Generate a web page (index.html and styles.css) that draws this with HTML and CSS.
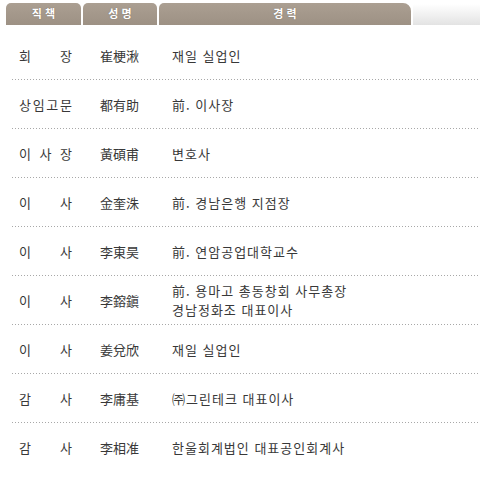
FILE: index.html
```html
<!DOCTYPE html>
<html lang="ko">
<head>
<meta charset="utf-8">
<title>임원 현황</title>
<link rel="stylesheet" href="styles.css">
</head>
<body>
<div class="board">
  <div class="head">
    <div class="tab tab-pos">직 책</div>
    <div class="tab tab-name">성 명</div>
    <div class="tab tab-career">경 력</div>
    <div class="head-rest"></div>
  </div>
  <div class="rows">
    <div class="row"><div class="pos"><span>회</span><span>장</span></div><div class="name">崔梗湫</div><div class="career">재일 실업인</div></div>
    <div class="row"><div class="pos"><span>상</span><span>임</span><span>고</span><span>문</span></div><div class="name">都有助</div><div class="career">前. 이사장</div></div>
    <div class="row"><div class="pos"><span>이</span><span>사</span><span>장</span></div><div class="name">黃碩甫</div><div class="career">변호사</div></div>
    <div class="row"><div class="pos"><span>이</span><span>사</span></div><div class="name">金奎洙</div><div class="career">前. 경남은행 지점장</div></div>
    <div class="row"><div class="pos"><span>이</span><span>사</span></div><div class="name">李東昊</div><div class="career">前. 연암공업대학교수</div></div>
    <div class="row"><div class="pos"><span>이</span><span>사</span></div><div class="name">李鎔鎭</div><div class="career">前. 용마고 총동창회 사무총장<br>경남정화조 대표이사</div></div>
    <div class="row"><div class="pos"><span>이</span><span>사</span></div><div class="name">姜兌欣</div><div class="career">재일 실업인</div></div>
    <div class="row"><div class="pos"><span>감</span><span>사</span></div><div class="name">李庸基</div><div class="career">㈜그린테크 대표이사</div></div>
    <div class="row last"><div class="pos"><span>감</span><span>사</span></div><div class="name">李相准</div><div class="career">한울회계법인 대표공인회계사</div></div>
  </div>
</div>
</body>
</html>
```
FILE: styles.css
```css
html, body {
  margin: 0;
  padding: 0;
  background: #ffffff;
}
body {
  font-family: "Noto Sans CJK KR", "Noto Sans", sans-serif;
  color: #383838;
  width: 480px;
}
.board {
  padding-top: 3px;
}
.head {
  display: flex;
  height: 22px;
  padding-left: 6px;
  gap: 2px;
}
.tab {
  background: linear-gradient(#ab9f92, #9d9184);
  color: #ffffff;
  font-size: 11px;
  font-weight: bold;
  line-height: 20px;
  text-align: center;
  border-radius: 5px 5px 0 0;
  text-shadow: 0 0 1px rgba(80, 68, 56, 0.6);
}
.tab-pos { width: 75px; }
.tab-name { width: 74px; }
.tab-career { width: 252px; border-top-right-radius: 8px; }
.head-rest {
  flex: 1;
  margin-top: 1px;
  background: linear-gradient(#ffffff, #e3e3e3);
}
.rows {
  padding-top: 6px;
}
.row {
  display: flex;
  align-items: center;
  height: 48px;
  margin-bottom: 1px;
  padding-left: 19px;
  font-size: 13px;
  line-height: 19px;
  position: relative;
}
.row::after {
  content: "";
  position: absolute;
  left: 12px;
  right: 0;
  bottom: -1px;
  height: 1px;
  background: repeating-linear-gradient(to right, #a8a8a8 0 1px, transparent 1px 3px);
}
.row.last::after { display: none; }
.pos {
  width: 53px;
  display: flex;
  justify-content: space-between;
  margin-right: 28px;
}
.name {
  width: 72px;
}
.career {
  flex: 1;
  letter-spacing: 1px;
}
```
